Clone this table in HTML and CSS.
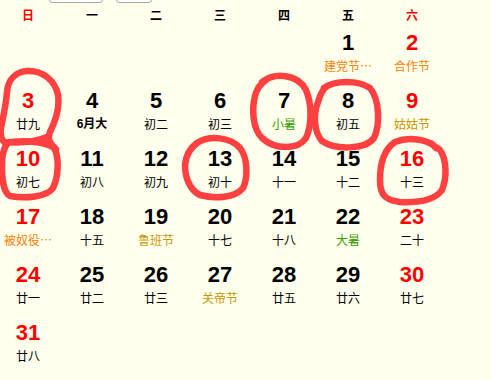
FILE: index.html
```html
<!DOCTYPE html>
<html lang="zh">
<head>
<meta charset="utf-8">
<link rel="stylesheet" href="styles.css">
</head>
<body>
<div class="page">
  <div class="toolbar">
    <div class="sel sel-year"></div>
    <div class="sel sel-month"></div>
  </div>
  <div class="cal">
    <div class="wk red">日</div><div class="wk">一</div><div class="wk">二</div><div class="wk">三</div><div class="wk">四</div><div class="wk">五</div><div class="wk red">六</div>

    <div class="cell"></div><div class="cell"></div><div class="cell"></div><div class="cell"></div><div class="cell"></div>
    <div class="cell"><div class="num">1</div><div class="lun fest">建党节…</div></div>
    <div class="cell"><div class="num red">2</div><div class="lun fest">合作节</div></div>

    <div class="cell"><div class="num red">3</div><div class="lun">廿九</div></div>
    <div class="cell"><div class="num">4</div><div class="lun month">6月大</div></div>
    <div class="cell"><div class="num">5</div><div class="lun">初二</div></div>
    <div class="cell"><div class="num">6</div><div class="lun">初三</div></div>
    <div class="cell"><div class="num">7</div><div class="lun term">小暑</div></div>
    <div class="cell"><div class="num">8</div><div class="lun">初五</div></div>
    <div class="cell"><div class="num red">9</div><div class="lun trad">姑姑节</div></div>

    <div class="cell"><div class="num red">10</div><div class="lun">初七</div></div>
    <div class="cell"><div class="num">11</div><div class="lun">初八</div></div>
    <div class="cell"><div class="num">12</div><div class="lun">初九</div></div>
    <div class="cell"><div class="num">13</div><div class="lun">初十</div></div>
    <div class="cell"><div class="num">14</div><div class="lun">十一</div></div>
    <div class="cell"><div class="num">15</div><div class="lun">十二</div></div>
    <div class="cell"><div class="num red">16</div><div class="lun">十三</div></div>

    <div class="cell"><div class="num red">17</div><div class="lun fest">被奴役…</div></div>
    <div class="cell"><div class="num">18</div><div class="lun">十五</div></div>
    <div class="cell"><div class="num">19</div><div class="lun trad">鲁班节</div></div>
    <div class="cell"><div class="num">20</div><div class="lun">十七</div></div>
    <div class="cell"><div class="num">21</div><div class="lun">十八</div></div>
    <div class="cell"><div class="num">22</div><div class="lun term">大暑</div></div>
    <div class="cell"><div class="num red">23</div><div class="lun">二十</div></div>

    <div class="cell"><div class="num red">24</div><div class="lun">廿一</div></div>
    <div class="cell"><div class="num">25</div><div class="lun">廿二</div></div>
    <div class="cell"><div class="num">26</div><div class="lun">廿三</div></div>
    <div class="cell"><div class="num">27</div><div class="lun trad">关帝节</div></div>
    <div class="cell"><div class="num">28</div><div class="lun">廿五</div></div>
    <div class="cell"><div class="num">29</div><div class="lun">廿六</div></div>
    <div class="cell"><div class="num red">30</div><div class="lun">廿七</div></div>

    <div class="cell"><div class="num red">31</div><div class="lun">廿八</div></div>
  </div>

  <svg class="marks" width="491" height="380" viewBox="0 0 491 380">
    <g fill="none" stroke="#ff4040" stroke-width="6.5" stroke-linecap="round" stroke-linejoin="round">
      <path d="M 56 149 C 50 143, 47 140, 50 132 C 56 120, 60 108, 58 95 C 55 80, 42 70, 27 71 C 15 72, 8 80, 7 92 C 6 105, 3 118, 1 128 C 0 136, 2 141, 5 142 C 18 143, 35 142, 47 137"/>
      <path d="M 262 82 C 275 72, 298 74, 306 90 C 312 104, 312 125, 306 138 C 298 150, 275 150, 262 138 C 252 128, 252 108, 255 96 C 257 88, 260 84, 266 80"/>
      <path d="M 324 88 C 335 80, 358 80, 370 88 C 380 100, 380 125, 374 138 C 365 150, 335 150, 322 141 C 314 132, 313 115, 318 102 C 320 95, 322 90, 327 86"/>
      <path d="M 5 143 C 20 140, 45 141, 54 148 C 60 158, 58 178, 53 188 C 47 197, 25 199, 10 196 C 3 192, 2 180, 2 165 C 2 155, 3 148, 8 143"/>
      <path d="M 197 143 C 210 135, 230 137, 240 148 C 248 158, 248 178, 243 188 C 235 198, 215 199, 200 195 C 190 190, 185 178, 185 165 C 186 155, 190 148, 197 143"/>
      <path d="M 436 148 C 430 140, 410 136, 395 142 C 383 150, 380 165, 380 180 C 380 195, 385 200, 400 202 C 420 203, 435 200, 442 190 C 447 178, 447 160, 440 150 C 437 147, 433 146, 432 144"/>
    </g>
  </svg>
</div>
</body>
</html>
```

FILE: styles.css
```css
html, body {
  margin: 0;
  padding: 0;
  background: #ffffee;
}
body {
  width: 491px;
  height: 380px;
  overflow: hidden;
  font-family: "Liberation Sans", "Noto Sans CJK SC", sans-serif;
}
.page {
  position: relative;
  width: 491px;
  height: 380px;
}
.toolbar {
  display: flex;
  align-items: flex-end;
  height: 3px;
  overflow: hidden;
  padding-left: 49px;
  gap: 13px;
}
.sel {
  flex: none;
  height: 20px;
  border: 1px solid #a8a8a8;
  border-radius: 3px;
  background: #fff;
}
.sel-year { width: 52px; }
.sel-month { width: 34px; }

.cal {
  display: grid;
  grid-template-columns: repeat(7, 64px);
  grid-auto-rows: 58px;
  grid-template-rows: 27px;
}
.wk {
  padding-right: 8px;
  text-align: center;
  font-family: "Noto Sans CJK SC", sans-serif;
  font-size: 12px;
  font-weight: bold;
  line-height: 24px;
  color: #000;
}
.cell {
  padding-right: 8px;
  padding-top: 1px;
  text-align: center;
  display: flex;
  flex-direction: column;
  align-items: center;
  gap: 4px;
}
.num {
  font-family: "Liberation Sans", sans-serif;
  font-weight: bold;
  font-size: 22px;
  line-height: 24px;
  color: #000;
}
.lun {
  font-family: "Noto Sans CJK SC", sans-serif;
  font-size: 12px;
  line-height: 14px;
  color: #000;
  white-space: nowrap;
}
.lun.month {
  font-family: "Liberation Sans", "Noto Sans CJK SC", sans-serif;
  font-weight: bold;
}
.red { color: #ff0000; }
.fest { color: #ff8000; }
.trad { color: #c89600; }
.term { color: #3a9a00; }

.marks {
  position: absolute;
  left: 0;
  top: 0;
  pointer-events: none;
}
```
